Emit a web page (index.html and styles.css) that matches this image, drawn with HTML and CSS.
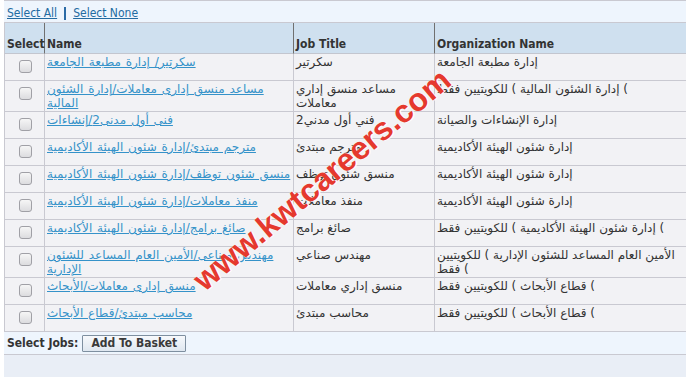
FILE: index.html
```html
<!DOCTYPE html>
<html lang="en">
<head>
<meta charset="utf-8">
<title>Jobs</title>
<link rel="stylesheet" href="styles.css">
</head>
<body>
<div class="page">
  <div class="toolbar">
    <a href="#" class="tlink">Select All</a>
    <span class="sep"></span>
    <a href="#" class="tlink">Select None</a>
  </div>
  <table class="jobs">
    <colgroup>
      <col class="col-sel">
      <col class="col-name">
      <col class="col-title">
      <col class="col-org">
    </colgroup>
    <thead>
      <tr>
        <th class="first">Select</th>
        <th>Name</th>
        <th>Job Title</th>
        <th>Organization Name</th>
      </tr>
    </thead>
    <tbody>
      <tr>
        <td class="sel"><input type="checkbox" class="chk"></td>
        <td><a href="#" class="jlink">سكرتير/ إدارة مطبعة الجامعة</a></td>
        <td>سكرتير</td>
        <td>إدارة مطبعة الجامعة</td>
      </tr>
      <tr>
        <td class="sel"><input type="checkbox" class="chk"></td>
        <td><a href="#" class="jlink">مساعد منسق إدارى معاملات/إدارة الشئون<br>المالية</a></td>
        <td>مساعد منسق إداري<br>معاملات</td>
        <td>إدارة الشئون المالية ) للكويتيين فقط (</td>
      </tr>
      <tr>
        <td class="sel"><input type="checkbox" class="chk"></td>
        <td><a href="#" class="jlink">فنى أول مدنى2/إنشاءات</a></td>
        <td>فني أول مدني2</td>
        <td>إدارة الإنشاءات والصيانة</td>
      </tr>
      <tr>
        <td class="sel"><input type="checkbox" class="chk"></td>
        <td><a href="#" class="jlink">مترجم مبتدئ/إدارة شئون الهيئة الأكاديمية</a></td>
        <td>مترجم مبتدئ</td>
        <td>إدارة شئون الهيئة الأكاديمية</td>
      </tr>
      <tr>
        <td class="sel"><input type="checkbox" class="chk"></td>
        <td><a href="#" class="jlink">منسق شئون توظف/إدارة شئون الهيئة الأكاديمية</a></td>
        <td>منسق شئون توظف</td>
        <td>إدارة شئون الهيئة الأكاديمية</td>
      </tr>
      <tr>
        <td class="sel"><input type="checkbox" class="chk"></td>
        <td><a href="#" class="jlink">منفذ معاملات/إدارة شئون الهيئة الأكاديمية</a></td>
        <td>منفذ معاملات</td>
        <td>إدارة شئون الهيئة الأكاديمية</td>
      </tr>
      <tr>
        <td class="sel"><input type="checkbox" class="chk"></td>
        <td><a href="#" class="jlink">صائغ برامج/إدارة شئون الهيئة الأكاديمية</a></td>
        <td>صائغ برامج</td>
        <td>إدارة شئون الهيئة الأكاديمية ) للكويتيين فقط (</td>
      </tr>
      <tr>
        <td class="sel"><input type="checkbox" class="chk"></td>
        <td><a href="#" class="jlink">مهندس صناعى/الأمين العام المساعد للشئون<br>الإدارية</a></td>
        <td>مهندس صناعي</td>
        <td>الأمين العام المساعد للشئون الإدارية ) للكويتيين<br>فقط (</td>
      </tr>
      <tr>
        <td class="sel"><input type="checkbox" class="chk"></td>
        <td><a href="#" class="jlink">منسق إدارى معاملات/الأبحاث</a></td>
        <td>منسق إداري معاملات</td>
        <td>قطاع الأبحاث ) للكويتيين فقط (</td>
      </tr>
      <tr>
        <td class="sel"><input type="checkbox" class="chk"></td>
        <td><a href="#" class="jlink">محاسب مبتدئ/قطاع الأبحاث</a></td>
        <td>محاسب مبتدئ</td>
        <td>قطاع الأبحاث ) للكويتيين فقط (</td>
      </tr>
    </tbody>
  </table>
  <div class="actions">
    <span class="label">Select Jobs:</span>
    <button type="button" class="btn">Add To Basket</button>
  </div>
  <div class="footer"></div>
  <div class="watermark">www.kwtcareers.com</div>
</div>
</body>
</html>
```

FILE: styles.css
```css
html, body {
  margin: 0;
  padding: 0;
  background: #ffffff;
  overflow: hidden;
}

body {
  font-family: "DejaVu Sans Condensed", "DejaVu Sans", sans-serif;
  font-stretch: condensed;
  font-size: 12px;
  color: #333333;
}

.page {
  position: relative;
  margin-left: 4px;
  width: 682px;
  height: 377px;
}

.toolbar {
  display: flex;
  align-items: center;
  gap: 7px;
  height: 21px;
  padding-left: 3px;
  background: #eef5fd;
  border-top: 1px solid #c9c9d1;
  border-bottom: 1px solid #c9c9d1;
}

.tlink {
  color: #236ba1;
  text-decoration: underline;
  line-height: 14px;
  margin-top: 2px;
}

.sep {
  width: 2px;
  height: 13px;
  background: #2a6aa6;
  margin-top: 3px;
}

.jobs {
  width: 682px;
  table-layout: fixed;
  border-collapse: separate;
  border-spacing: 0;
}

.col-sel { width: 40px; }
.col-name { width: 249px; }
.col-title { width: 141px; }
.col-org { width: 252px; }

.jobs th {
  box-sizing: border-box;
  height: 31px;
  padding: 0 2px 1px;
  vertical-align: bottom;
  text-align: left;
  font-weight: bold;
  line-height: 15px;
  color: #333333;
  background: #cfe0ef;
  border-left: 1px solid #707070;
  border-bottom: 1px solid #c3c6cf;
  white-space: nowrap;
}

.jobs th.first {
  border-left: 1px solid #c9c9d1;
}

.jobs td {
  box-sizing: border-box;
  height: 27px;
  padding: 1px 2px;
  vertical-align: top;
  font-family: "DejaVu Sans", sans-serif;
  font-stretch: normal;
  font-size: 12px;
  line-height: 14px;
  white-space: nowrap;
  overflow: hidden;
  background: #f2f2f5;
  border-left: 1px solid #c9c9d1;
  border-bottom: 1px solid #c9c9d1;
  color: #333333;
}

.jobs td.sel {
  padding: 0;
}

.chk {
  -webkit-appearance: none;
  appearance: none;
  display: block;
  box-sizing: border-box;
  width: 13px;
  height: 13px;
  margin: 6px auto 0;
  position: relative;
  left: 1px;
  border: 1px solid #a0a0a6;
  border-radius: 3px;
  background: linear-gradient(#f6f6f6, #dcdcdf);
}

.jlink {
  color: #3592c9;
  text-decoration: underline;
  word-spacing: 1px;
}

.actions {
  display: flex;
  align-items: center;
  gap: 4px;
  height: 22px;
  padding-left: 3px;
  background: #eef5fd;
  border-bottom: 1px solid #c9c9d1;
}

.label {
  font-weight: bold;
  color: #333333;
}

.btn {
  box-sizing: border-box;
  height: 17px;
  width: 104px;
  padding: 0;
  font-family: inherit;
  font-stretch: condensed;
  font-size: 12px;
  font-weight: bold;
  line-height: 15px;
  color: #3a3a3a;
  background: linear-gradient(#f7f9fc, #dfe7f0);
  border: 1px solid #7e8fa0;
  border-radius: 1px;
}

.footer {
  height: 22px;
  background: #e9eef6;
}

.watermark {
  position: absolute;
  left: 318px;
  top: 180px;
  transform: translate(-50%, -50%) rotate(-40deg);
  font-family: "Liberation Sans", Arial, sans-serif;
  font-stretch: normal;
  font-size: 32px;
  font-weight: bold;
  color: #e5392e;
  white-space: nowrap;
  text-shadow: 0 0 1px #ffffff, 1px 1px 0 #ffffff;
  pointer-events: none;
}
```
